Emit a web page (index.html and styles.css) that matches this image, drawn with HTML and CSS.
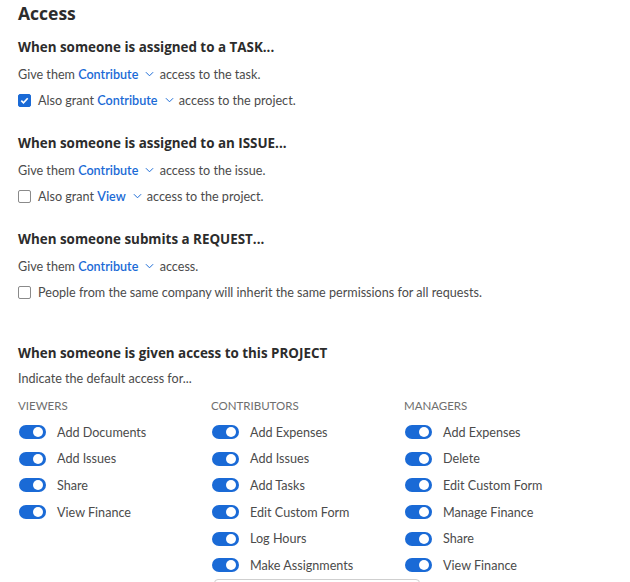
FILE: index.html
```html
<!DOCTYPE html>
<html>
<head>
<meta charset="utf-8">
<link rel="stylesheet" href="styles.css">
</head>
<body>
<div class="page">
  <h1 class="title">Access</h1>

  <section class="block">
    <h2 class="block-title">When someone is assigned to a TASK...</h2>
    <div class="line">Give them <span class="pick">Contribute <svg class="chev" viewBox="0 0 10 6" width="9" height="6"><path d="M1 1l4 4 4-4" fill="none" stroke="#1a6ad6" stroke-width="1.1"/></svg></span> access to the task.</div>
    <label class="line check-line"><span class="box checked"><svg viewBox="0 0 12 12" width="11" height="11"><path d="M2.5 6.2l2.4 2.4 4.6-5" fill="none" stroke="#fff" stroke-width="1.8"/></svg></span>Also grant <span class="pick">Contribute <svg class="chev" viewBox="0 0 10 6" width="9" height="6"><path d="M1 1l4 4 4-4" fill="none" stroke="#1a6ad6" stroke-width="1.1"/></svg></span> access to the project.</label>
  </section>

  <section class="block">
    <h2 class="block-title">When someone is assigned to an ISSUE...</h2>
    <div class="line">Give them <span class="pick">Contribute <svg class="chev" viewBox="0 0 10 6" width="9" height="6"><path d="M1 1l4 4 4-4" fill="none" stroke="#1a6ad6" stroke-width="1.1"/></svg></span> access to the issue.</div>
    <label class="line check-line"><span class="box"></span>Also grant <span class="pick">View <svg class="chev" viewBox="0 0 10 6" width="9" height="6"><path d="M1 1l4 4 4-4" fill="none" stroke="#1a6ad6" stroke-width="1.1"/></svg></span> access to the project.</label>
  </section>

  <section class="block">
    <h2 class="block-title">When someone submits a REQUEST...</h2>
    <div class="line">Give them <span class="pick">Contribute <svg class="chev" viewBox="0 0 10 6" width="9" height="6"><path d="M1 1l4 4 4-4" fill="none" stroke="#1a6ad6" stroke-width="1.1"/></svg></span> access.</div>
    <label class="line check-line"><span class="box"></span>People from the same company will inherit the same permissions for all requests.</label>
  </section>

  <section class="block project">
    <h2 class="block-title">When someone is given access to this PROJECT</h2>
    <div class="line">Indicate the default access for...</div>
    <div class="cols">
      <div class="col">
        <div class="col-head">VIEWERS</div>
        <div class="toggle-row"><span class="toggle"></span>Add Documents</div>
        <div class="toggle-row"><span class="toggle"></span>Add Issues</div>
        <div class="toggle-row"><span class="toggle"></span>Share</div>
        <div class="toggle-row"><span class="toggle"></span>View Finance</div>
      </div>
      <div class="col">
        <div class="col-head">CONTRIBUTORS</div>
        <div class="toggle-row"><span class="toggle"></span>Add Expenses</div>
        <div class="toggle-row"><span class="toggle"></span>Add Issues</div>
        <div class="toggle-row"><span class="toggle"></span>Add Tasks</div>
        <div class="toggle-row"><span class="toggle"></span>Edit Custom Form</div>
        <div class="toggle-row"><span class="toggle"></span>Log Hours</div>
        <div class="toggle-row"><span class="toggle"></span>Make Assignments</div>
        <div class="more-box"></div>
      </div>
      <div class="col">
        <div class="col-head">MANAGERS</div>
        <div class="toggle-row"><span class="toggle"></span>Add Expenses</div>
        <div class="toggle-row"><span class="toggle"></span>Delete</div>
        <div class="toggle-row"><span class="toggle"></span>Edit Custom Form</div>
        <div class="toggle-row"><span class="toggle"></span>Manage Finance</div>
        <div class="toggle-row"><span class="toggle"></span>Share</div>
        <div class="toggle-row"><span class="toggle"></span>View Finance</div>
      </div>
    </div>
  </section>
</div>
</body>
</html>
```

FILE: styles.css
```css
html, body {
  margin: 0;
  padding: 0;
  background: #fff;
}
body {
  font-family: "Lato", "Open Sans", sans-serif;
  color: #4b4b4b;
  font-size: 12.6px;
  overflow: hidden;
}
.page {
  padding: 0 18px;
}
.title {
  margin: 0;
  padding-top: 2px;
  font-family: "Open Sans", "Lato", sans-serif;
  font-size: 17.5px;
  line-height: 22px;
  font-weight: 700;
  color: #2c2c2c;
}
.block {
  display: flex;
  flex-direction: column;
}
.block + .block {
  margin-top: 7px;
}
.block-title {
  margin: 14px 0 0;
  font-family: "Open Sans", "Lato", sans-serif;
  font-size: 13.4px;
  line-height: 18px;
  font-weight: 700;
  color: #2c2c2c;
}
.line {
  display: flex;
  align-items: center;
  height: 26px;
  white-space: pre;
}
.block-title + .line {
  margin-top: 5px;
}
.project .block-title + .line {
  margin-top: 3px;
}
.pick {
  color: #1a6ad6;
  font-weight: 600;
  display: inline-flex;
  align-items: center;
}
.chev {
  margin-left: 4px;
  margin-right: 2px;
}
.box {
  width: 11px;
  height: 11px;
  border: 1px solid #8a8a8a;
  border-radius: 2px;
  margin-right: 7px;
  display: inline-flex;
  align-items: center;
  justify-content: center;
}
.box.checked {
  background: #1a6ad6;
  border-color: #1a6ad6;
}
.block.project {
  margin-top: 25px;
}
.cols {
  display: grid;
  grid-template-columns: 193px 193px 1fr;
  margin-top: 1px;
}
.col-head {
  font-size: 11.5px;
  color: #6e6e6e;
  height: 27px;
  display: flex;
  align-items: center;
}
.toggle-row {
  display: flex;
  align-items: center;
  height: 26.6px;
  color: #4b4b4b;
}
.toggle {
  width: 27px;
  height: 14px;
  border-radius: 7px;
  background: #1a6ad6;
  margin-left: 1px;
  margin-right: 11px;
  position: relative;
  flex: none;
}
.toggle::after {
  content: "";
  position: absolute;
  right: 3px;
  top: 2px;
  width: 10px;
  height: 10px;
  border-radius: 50%;
  background: #fff;
}
.more-box {
  margin-top: 0;
  margin-left: 3px;
  width: 204px;
  height: 30px;
  border: 1px solid #cfcfcf;
  border-radius: 4px;
}
```
